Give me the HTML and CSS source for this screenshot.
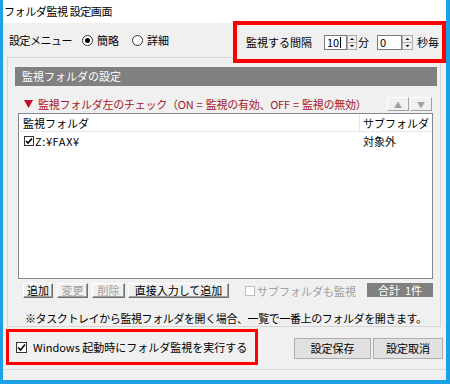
FILE: index.html
```html
<!DOCTYPE html>
<html lang="ja">
<head>
  <meta charset="UTF-8" />
  <title>フォルダ監視 設定画面</title>
  <link rel="stylesheet" href="styles.css">
</head>
<body>
  <div class="window">
    <div class="titlebar">フォルダ監視 設定画面</div>

    <div class="top">
      <span class="menu-label">設定メニュー</span>
      <label class="radio"><span class="radio-dot on"></span>簡略</label>
      <label class="radio"><span class="radio-dot"></span>詳細</label>

      <div class="interval mark">
        <span class="interval-label">監視する間隔</span>
        <span class="spin">
          <span class="spin-box w1">10<i class="caret"></i></span>
          <svg class="spin-arrows" width="10" height="15" viewBox="0 0 10 15">
            <rect x="0.5" y="0.5" width="9" height="14" fill="#f0f0f0" stroke="#acacac"/>
            <line x1="1" y1="7.5" x2="9" y2="7.5" stroke="#acacac"/>
            <path d="M5 3 L7 5 L3 5 Z" fill="#000"/>
            <path d="M3 10 L7 10 L5 12 Z" fill="#000"/>
          </svg>
        </span>
        <span class="unit">分</span>
        <span class="spin">
          <span class="spin-box w2">0</span>
          <svg class="spin-arrows" width="11" height="15" viewBox="0 0 11 15">
            <rect x="0.5" y="0.5" width="10" height="14" fill="#f0f0f0" stroke="#acacac"/>
            <line x1="1" y1="7.5" x2="10" y2="7.5" stroke="#acacac"/>
            <path d="M5.5 3 L7.5 5 L3.5 5 Z" fill="#000"/>
            <path d="M3.5 10 L7.5 10 L5.5 12 Z" fill="#000"/>
          </svg>
        </span>
        <span class="unit last">秒毎</span>
      </div>
    </div>

    <div class="group">
      <div class="group-head">監視フォルダの設定</div>

      <div class="hint-row">
        <svg class="hint-mark" width="9" height="8" viewBox="0 0 9 8"><path d="M0 0 H9 L4.5 8 Z" fill="#c0102a"/></svg>
        <span class="hint">監視フォルダ左のチェック（ON = 監視の有効、OFF = 監視の無効）</span>
        <span class="order">
          <button class="mini arrow" disabled>▲</button>
          <button class="mini arrow" disabled>▼</button>
        </span>
      </div>

      <div class="list">
        <div class="list-head">
          <span class="col-name">監視フォルダ</span>
          <span class="col-sub">サブフォルダ</span>
        </div>
        <div class="list-row">
          <span class="col-name">
            <span class="check small">
              <svg width="8" height="8" viewBox="0 0 8 8"><path d="M1 4 L3 6 L7 1.5" fill="none" stroke="#000" stroke-width="1.6"/></svg>
            </span>
            <span class="path">Z:¥FAX¥</span>
          </span>
          <span class="col-sub">対象外</span>
        </div>
      </div>

      <div class="actions">
        <button class="mini b1">追加</button>
        <button class="mini b2" disabled>変更</button>
        <button class="mini b3" disabled>削除</button>
        <button class="mini b4">直接入力して追加</button>
        <label class="sub-check"><span class="check small off"></span>サブフォルダも監視</label>
        <span class="total">合計&nbsp;&nbsp;1件</span>
      </div>

      <p class="note">※タスクトレイから監視フォルダを開く場合、一覧で一番上のフォルダを開きます。</p>
    </div>

    <div class="bottom">
      <label class="startup mark">
        <span class="check">
          <svg width="9" height="9" viewBox="0 0 9 9"><path d="M1 4.5 L3.5 7 L8 1.5" fill="none" stroke="#000" stroke-width="1.6"/></svg>
        </span>
        Windows 起動時にフォルダ監視を実行する
      </label>
      <button class="btn save">設定保存</button>
      <button class="btn cancel">設定取消</button>
    </div>

    <div class="status"></div>
  </div>
</body>
</html>
```

FILE: styles.css
```css
* {
  margin: 0;
  padding: 0;
  box-sizing: border-box;
}

body {
  font-family: "Noto Sans CJK JP", "Noto Sans", sans-serif;
  font-size: 11px;
  color: #000;
  background: #fff;
}

.window {
  width: 450px;
  height: 384px;
  border: solid #1ba2e6;
  border-width: 0 4px 4px 3px;
  background: #f0f0f0;
  display: flex;
  flex-direction: column;
}

.titlebar {
  height: 23px;
  line-height: 23px;
  padding-left: 1px;
  background: #fff;
  letter-spacing: -0.4px;
}

/* settings menu row */
.top {
  height: 34px;
  display: flex;
  align-items: center;
  padding-left: 6px;
}

.menu-label {
  letter-spacing: -0.5px;
  margin-right: 10px;
}

.radio {
  display: flex;
  align-items: center;
  gap: 4px;
  margin-right: 13px;
}

.radio-dot {
  width: 11px;
  height: 11px;
  border: 1px solid #333;
  border-radius: 50%;
  background: #fff;
  display: flex;
  align-items: center;
  justify-content: center;
}

.radio-dot.on::after {
  content: "";
  width: 5px;
  height: 5px;
  border-radius: 50%;
  background: #000;
}

/* red annotation frames */
.mark {
  border: 4px solid #ff0000;
  position: relative;
  z-index: 1;
}

.interval {
  margin-left: auto;
  align-self: flex-start;
  margin-top: -2px;
  height: 42px;
  display: flex;
  align-items: center;
  padding: 0 3px 0 9px;
  background: #f0f0f0;
}

.interval-label {
  margin-right: 12px;
}

.spin {
  display: flex;
}

.spin-box {
  height: 15px;
  border: 1px solid #7a7a7a;
  background: #fff;
  padding-left: 2px;
  line-height: 13px;
  display: flex;
  align-items: center;
}

.spin-box.w1 {
  width: 23px;
}

.spin-box.w2 {
  width: 25px;
}

.caret {
  width: 1px;
  height: 11px;
  background: #000;
  margin-left: 1px;
}

.unit {
  margin: 0 8px 0 1px;
}

.unit.last {
  margin: 0 0 0 4px;
}

/* folder group */
.group {
  height: 270px;
  margin: 0 5px 0 4px;
  border: 1px solid #d5d5d5;
  padding: 9px 3px 0 7px;
}

.group-head {
  height: 19px;
  line-height: 19px;
  padding-left: 7px;
  background: #808080;
  color: #fff;
}

.hint-row {
  height: 15px;
  margin: 10px 0 2px;
  display: flex;
  align-items: center;
}

.hint-mark {
  margin: 0 5px 0 9px;
}

.hint {
  color: #a3192e;
  letter-spacing: -0.25px;
  word-spacing: 1px;
}

.order {
  margin-left: auto;
  margin-right: 5px;
  display: flex;
  gap: 1px;
}

.mini {
  height: 15px;
  font-family: inherit;
  font-size: 11px;
  line-height: 13px;
  background: #f0f0f0;
  border: 1px solid;
  border-color: #fff #6d6d6d #6d6d6d #fff;
  box-shadow: inset -1px -1px 0 #a0a0a0;
  color: #000;
}

.mini:disabled {
  color: #a0a0a0;
}

.mini.arrow {
  width: 22px;
  height: 14px;
  font-size: 8px;
  border-color: #fff #a0a0a0 #a0a0a0 #fff;
  box-shadow: none;
}

.list {
  height: 166px;
  margin: 0 4px 0 3px;
  border: 1px solid #828790;
  background: #fff;
}

.list-head,
.list-row {
  display: flex;
  height: 18px;
  align-items: center;
}

.list-head {
  border-bottom: 1px solid #e5e5e5;
}

.list-head .col-name {
  border-right: 1px solid #e5e5e5;
}

.col-name {
  width: 341px;
  height: 100%;
  padding-left: 4px;
  display: flex;
  align-items: center;
}

.col-sub {
  padding-left: 3px;
}

.list-row .col-name {
  padding-left: 5px;
  gap: 1px;
}

.path {
  letter-spacing: 0.6px;
}

.check {
  width: 11px;
  height: 11px;
  border: 1px solid #333;
  background: #fff;
  display: flex;
  align-items: center;
  justify-content: center;
}

.check.small {
  width: 10px;
  height: 10px;
}

.check.off {
  border-color: #bcbcbc;
}

.actions {
  height: 15px;
  margin-top: 4px;
  display: flex;
  align-items: center;
}

.b1 {
  width: 30px;
  margin-left: 8px;
}

.b2 {
  width: 31px;
  margin-left: 4px;
}

.b3 {
  width: 33px;
  margin-left: 4px;
}

.b4 {
  width: 101px;
  margin-left: 3px;
}

.sub-check {
  margin-left: 16px;
  display: flex;
  align-items: center;
  gap: 2px;
  color: #a0a0a0;
}

.total {
  margin: -2px 4px 0 auto;
  width: 66px;
  height: 14px;
  line-height: 14px;
  background: #808080;
  color: #fff;
  text-align: center;
}

.note {
  margin: 14px 0 0 10px;
  line-height: 12px;
  letter-spacing: -0.4px;
}

/* bottom buttons */
.bottom {
  height: 42px;
  display: flex;
  align-items: center;
}

.startup {
  width: 252px;
  height: 36px;
  margin: -2px 0 0 3px;
  border-width: 3px;
  padding-left: 7px;
  display: flex;
  align-items: center;
  gap: 6px;
}

.btn {
  height: 21px;
  font-family: inherit;
  font-size: 11px;
  background: #e1e1e1;
  border: 1px solid #adadad;
}

.save {
  width: 77px;
  margin-left: auto;
}

.cancel {
  width: 70px;
  margin: 0 3px 0 2px;
}

.status {
  height: 11px;
  border-top: 1px solid #d9d9d9;
}
```
